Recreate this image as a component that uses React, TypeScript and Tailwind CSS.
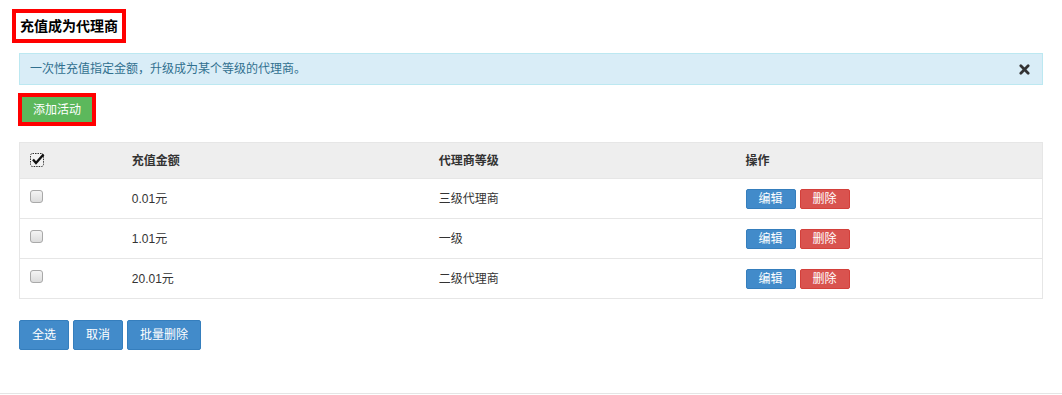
import React from "react";

const rows = [
    { id: 1, amount: "0.01元", level: "三级代理商" },
    { id: 2, amount: "1.01元", level: "一级" },
    { id: 3, amount: "20.01元", level: "二级代理商" },
];

const Box: React.FC = () => (
    <span className="inline-block w-[13px] h-[13px] rounded-[3px] border border-[#a9a9a9] bg-gradient-to-b from-[#f4f4f4] to-[#dcdcdc]" />
);

const CheckedBox: React.FC = () => (
    <svg width="15" height="15" viewBox="0 0 15 15" className="block">
        <rect x="0.5" y="0.5" width="13" height="13" rx="2" fill="#f2f2f2" stroke="#333" strokeDasharray="1.5 1" />
        <path d="M3 6.5 L6 10 L13.5 1.5" fill="none" stroke="#111" strokeWidth="2.4" />
    </svg>
);

const App: React.FC = () => {
    return (
        <div className="w-[1062px] h-[395px] bg-white text-[12px] text-[#333] font-['Liberation_Sans','Noto_Sans_CJK_SC',sans-serif] flex flex-col">
            <div className="px-[19px] pt-[9px] flex-1">
                <div className="-ml-[7px] inline-block border-4 border-[#ff0000] px-1 h-[34px] leading-[26px] text-[14px] font-bold text-black">
                    充值成为代理商
                </div>

                <div className="mt-[10px] h-[32px] border border-[#bce8f1] bg-[#d9edf7] text-[#31708f] flex items-center justify-between pl-[10px] pr-[12px]">
                    <span>一次性充值指定金额，升级成为某个等级的代理商。</span>
                    <svg width="11" height="11" viewBox="0 0 12 12">
                        <path d="M2 2 L10 10 M10 2 L2 10" stroke="#333" strokeWidth="3" strokeLinecap="round" />
                    </svg>
                </div>

                <div className="mt-2 -ml-px inline-block border-4 border-[#ff0000]">
                    <button className="block w-[70px] h-[25px] bg-[#5cb85c] text-white text-[12px]">添加活动</button>
                </div>

                <table className="mt-4 w-full table-fixed border-collapse border border-[#e6e6e6]">
                    <thead>
                        <tr className="bg-[#eeeeee] h-[36px] text-left">
                            <th className="w-[10%] pl-[10px] font-bold">
                                <CheckedBox />
                            </th>
                            <th className="w-[30%] pl-[10px] font-bold">充值金额</th>
                            <th className="w-[30%] pl-[10px] font-bold">代理商等级</th>
                            <th className="w-[30%] pl-[10px] font-bold">操作</th>
                        </tr>
                    </thead>
                    <tbody>
                        {rows.map((row) => (
                            <tr key={row.id} className="h-[40px] border-t border-[#e6e6e6]">
                                <td className="pl-[10px] align-middle">
                                    <div className="-mt-1 flex">
                                        <Box />
                                    </div>
                                </td>
                                <td className="pl-[10px]">{row.amount}</td>
                                <td className="pl-[10px]">{row.level}</td>
                                <td className="pl-[10px]">
                                    <div className="flex gap-1">
                                        <button className="w-[50px] h-[20px] rounded-[2px] border border-[#357ebd] bg-[#428bca] text-white text-[12px] leading-none">编辑</button>
                                        <button className="w-[50px] h-[20px] rounded-[2px] border border-[#d43f3a] bg-[#d9534f] text-white text-[12px] leading-none">删除</button>
                                    </div>
                                </td>
                            </tr>
                        ))}
                    </tbody>
                </table>

                <div className="mt-[21px] flex gap-1">
                    <button className="w-[50px] h-[30px] rounded-[2px] border border-[#357ebd] bg-[#428bca] text-white text-[12px]">全选</button>
                    <button className="w-[50px] h-[30px] rounded-[2px] border border-[#357ebd] bg-[#428bca] text-white text-[12px]">取消</button>
                    <button className="w-[74px] h-[30px] rounded-[2px] border border-[#357ebd] bg-[#428bca] text-white text-[12px]">批量删除</button>
                </div>
            </div>
            <div className="h-px bg-[#e5e5e5] mb-[1px]" />
        </div>
    );
};

export default App;
